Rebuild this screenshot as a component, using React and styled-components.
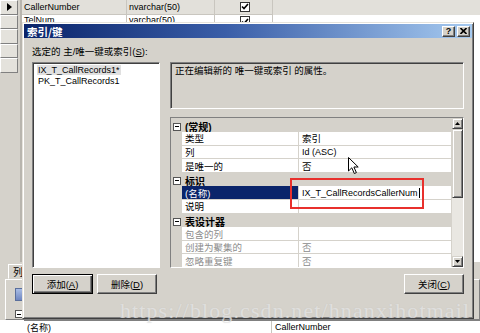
import React from 'react';
import styled, { createGlobalStyle, css } from 'styled-components';

const FACE = '#d5d2cb';
const SHADOW = '#808080';
const DARK = '#404040';
const NAVY = '#0a246a';

const Global = createGlobalStyle`
  html, body { margin: 0; padding: 0; background: #fff; }
  body {
    font-family: "Liberation Sans", "Noto Sans CJK SC", sans-serif;
    font-size: 9.5px;
    color: #000;
  }
  * { box-sizing: border-box; }
`;

const Screen = styled.div`
  position: relative;
  width: 480px;
  height: 333px;
  overflow: hidden;
  background: #fff;
`;

/* ---------- background: table designer ---------- */
const Designer = styled.div`
  display: flex;
  flex-direction: column;
  height: 100%;
`;

const GridArea = styled.div`
  display: flex;
  height: 262px;
`;

const RowHeaders = styled.div`
  width: 22px;
  display: flex;
  flex-direction: column;
  background: ${FACE};
  border-right: 2px solid #b8b5ae;
`;

const RowHead = styled.div`
  height: 14.5px;
  width: 18px;
  border: 1px solid;
  border-color: #fff ${SHADOW} ${SHADOW} #fff;
  background: #e4e2dc;
  display: flex;
  align-items: center;
  justify-content: center;
`;

const GridBody = styled.div`
  flex: 1;
  display: flex;
  flex-direction: column;
`;

const GridRow = styled.div`
  display: flex;
  height: 14.5px;
  background: ${(p) => (p.$sel ? '#e2e0da' : '#fff')};
`;

const GridCell = styled.div`
  width: ${(p) => p.$w}px;
  border-right: 1px solid #c9c6bf;
  border-bottom: 1px solid #c9c6bf;
  padding-left: 2px;
  display: flex;
  align-items: ${(p) => (p.$top ? 'flex-start' : 'center')};
  justify-content: ${(p) => (p.$center ? 'center' : 'flex-start')};
  font-size: 9px;
  white-space: nowrap;
  overflow: hidden;
`;

const Check = styled.div`
  width: 10px;
  height: 10px;
  border: 1px solid #333;
  background: #fff;
  display: flex;
  align-items: center;
  justify-content: center;
`;

const LowerPanel = styled.div`
  height: 58px;
  background: ${FACE};
  display: flex;
  flex-direction: column;
  padding: 2px 0 0 5px;
`;

const TabRow = styled.div`
  display: flex;
  height: 15px;
  padding-left: 3px;
`;

const Tab = styled.div`
  padding: 0 4px;
  border: 1px solid;
  border-color: #fff ${DARK} transparent #fff;
  display: flex;
  align-items: center;
  font-size: 10px;
`;

const TabPage = styled.div`
  flex: 1;
  border: 1px solid;
  border-color: #fff ${SHADOW} ${SHADOW} #fff;
  padding: 8px 0 0 9px;
  display: flex;
  flex-direction: column;
  gap: 9px;
`;

const ToolIcon = styled.div`
  width: 9px;
  height: 13px;
  border: 1px solid #5a6f9c;
  background: linear-gradient(#a9bde6, #6f86c0);
`;

const BottomRow = styled.div`
  height: 13px;
  display: flex;
  background: #fff;
  border-top: 1px solid ${SHADOW};
  margin-left: 24px;
`;

const BottomCell = styled.div`
  width: ${(p) => (p.$w ? `${p.$w}px` : 'auto')};
  flex: ${(p) => (p.$w ? 'none' : 1)};
  padding-left: 3px;
  border-right: ${(p) => (p.$w ? `1px solid #c9c6bf` : 'none')};
  font-size: 9px;
  display: flex;
  align-items: center;
`;

/* ---------- dialog ---------- */
const Dialog = styled.div`
  position: absolute;
  left: 22px;
  top: 22px;
  width: 452px;
  height: 297px;
  background: ${FACE};
  border: 1px solid;
  border-color: #e6e3dc ${DARK} ${DARK} #e6e3dc;
  box-shadow: inset 1px 1px #fff, inset -1px -1px ${SHADOW};
  padding: 1px;
  display: flex;
  flex-direction: column;
`;

const TitleBar = styled.div`
  height: 14px;
  background: linear-gradient(90deg, ${NAVY} 0%, #3a5ea8 45%, #a6caf0 100%);
  display: flex;
  align-items: center;
  justify-content: space-between;
  padding: 0 2px 0 3px;
`;

const Title = styled.div`
  color: #fff;
  font-weight: bold;
  font-size: 10.5px;
  font-family: "Noto Sans CJK SC", sans-serif;
`;

const TitleButtons = styled.div`
  display: flex;
  gap: 2px;
`;

const TBtn = styled.div`
  width: 13px;
  height: 11px;
  background: ${FACE};
  border: 1px solid;
  border-color: #fff ${DARK} ${DARK} #fff;
  box-shadow: inset -1px -1px ${SHADOW};
  display: flex;
  align-items: center;
  justify-content: center;
  font-weight: bold;
  font-size: 9px;
  line-height: 1;
`;

const Body = styled.div`
  flex: 1;
  display: flex;
  flex-direction: column;
  padding: 8px 8px 0 8px;
`;

const Label = styled.div`
  height: 12px;
  line-height: 12px;
  font-size: 9.5px;
  margin-bottom: 4px;
`;

const Main = styled.div`
  display: flex;
  gap: 10px;
  height: 206px;
`;

const ListBox = styled.div`
  width: 128px;
  background: #fff;
  border: 1px solid;
  border-color: ${SHADOW} #fff #fff ${SHADOW};
  box-shadow: inset 1px 1px ${DARK};
  padding: 2px 0 0 4px;
  display: flex;
  flex-direction: column;
`;

const ListItem = styled.div`
  height: 11px;
  line-height: 11px;
  font-size: 9px;
  span {
    padding: 0 1px;
    background: ${(p) => (p.$sel ? '#e0e0e0' : 'transparent')};
  }
`;

const RightCol = styled.div`
  flex: 1;
  display: flex;
  flex-direction: column;
  gap: 8px;
`;

const DescBox = styled.div`
  height: 47px;
  border: 1px solid;
  border-color: ${SHADOW} #fff #fff ${SHADOW};
  box-shadow: inset 1px 1px ${DARK};
  padding: 2px 4px;
  line-height: 12px;
  font-size: 9.5px;
`;

const PropGrid = styled.div`
  position: relative;
  flex: 1;
  display: flex;
  border: 1px solid;
  border-color: ${SHADOW} #fff #fff ${SHADOW};
  background: ${FACE};
  overflow: hidden;
`;

const Rows = styled.div`
  flex: 1;
  display: flex;
  flex-direction: column;
  padding-top: 0.5px;
`;

const PRow = styled.div`
  display: grid;
  grid-template-columns: 11px 117px 1fr;
  height: 13.6px;
`;

const Gutter = styled.div`
  background: ${FACE};
  display: flex;
  align-items: center;
  justify-content: center;
`;

const Expander = styled.div`
  width: 8px;
  height: 8px;
  border: 1px solid #555;
  background: #fff;
  display: flex;
  align-items: center;
  justify-content: center;
  &::after {
    content: '';
    width: 4px;
    height: 1px;
    background: #000;
  }
`;

const CatLabel = styled.div`
  grid-column: 2 / 4;
  background: ${FACE};
  font-weight: bold;
  padding-left: 3px;
  display: flex;
  align-items: center;
  font-size: 10px;
  border-bottom: 1px solid ${FACE};
`;

const PCell = styled.div`
  background: ${(p) => (p.$sel ? NAVY : '#fff')};
  color: ${(p) => (p.$sel ? '#fff' : p.$dis ? '#8c8c8c' : '#000')};
  border-right: 1px solid ${FACE};
  border-bottom: 1px solid ${FACE};
  padding-left: 3px;
  display: flex;
  align-items: center;
  white-space: nowrap;
  overflow: hidden;
  font-size: ${(p) => (p.$latin ? '9px' : '9.5px')};
`;

const Caret = styled.span`
  display: inline-block;
  width: 1px;
  height: 10px;
  background: #000;
  margin-left: 1px;
`;

const ScrollBar = styled.div`
  width: 11px;
  display: flex;
  flex-direction: column;
  background: #e9e7e2;
`;

const SBtn = styled.div`
  height: ${(p) => p.$h || 11}px;
  flex: none;
  background: ${FACE};
  border: 1px solid;
  border-color: ${FACE} ${DARK} ${DARK} ${FACE};
  box-shadow: inset 1px 1px #fff, inset -1px -1px ${SHADOW};
  display: flex;
  align-items: center;
  justify-content: center;
`;

const Track = styled.div`
  flex: 1;
`;

const RedBox = styled.div`
  position: absolute;
  left: 119px;
  top: 60px;
  width: 134px;
  height: 31px;
  border: 2.5px solid #e8302c;
  pointer-events: none;
`;

const Cursor = styled.svg`
  position: absolute;
  left: 177px;
  top: 39px;
`;

const ButtonRow = styled.div`
  display: flex;
  justify-content: space-between;
  margin-top: 6px;
`;

const BtnGroup = styled.div`
  display: flex;
  gap: 4px;
`;

const Btn = styled.div`
  width: ${(p) => p.$w}px;
  height: 20px;
  background: ${FACE};
  display: flex;
  align-items: center;
  justify-content: center;
  font-size: 9.5px;
  border: 1px solid;
  border-color: #fff ${DARK} ${DARK} #fff;
  box-shadow: inset -1px -1px ${SHADOW};
  ${(p) =>
    p.$default &&
    css`
      border-color: #000;
      box-shadow: inset 1px 1px #fff, inset -1px -1px ${DARK}, inset -2px -2px ${SHADOW};
    `}
`;

const Watermark = styled.div`
  position: absolute;
  left: 120px;
  top: 300px;
  font-family: "Liberation Serif", serif;
  font-size: 22px;
  line-height: 22px;
  letter-spacing: 1.1px;
  color: rgba(232, 232, 232, 0.75);
  text-shadow: 0 0 1px rgba(150, 150, 150, 0.25);
  white-space: nowrap;
  pointer-events: none;
`;

const Arrow = ({ dir }) => (
  <svg width="5" height="3" viewBox="0 0 5 3">
    {dir === 'up' ? <path d="M0 3 L2.5 0 L5 3 Z" fill="#000" /> : <path d="M0 0 L2.5 3 L5 0 Z" fill="#000" />}
  </svg>
);

const props = [
  { cat: '(常规)' },
  { name: '类型', value: '索引' },
  { name: '列', value: 'Id (ASC)', latin: true },
  { name: '是唯一的', value: '否' },
  { cat: '标识' },
  { name: '(名称)', value: 'IX_T_CallRecordsCallerNum', sel: true, latin: true, caret: true },
  { name: '说明', value: '' },
  { cat: '表设计器' },
  { name: '包含的列', value: '', dis: true },
  { name: '创建为聚集的', value: '否', dis: true },
  { name: '忽略重复键', value: '否', dis: true },
];

export default function App() {
  return (
    <Screen>
      <Global />
      <Designer>
        <GridArea>
          <RowHeaders>
            <RowHead>
              <svg width="5" height="8" viewBox="0 0 5 8">
                <path d="M0 0 L5 4 L0 8 Z" fill="#000" />
              </svg>
            </RowHead>
            <RowHead />
            <RowHead />
            <RowHead />
            <RowHead />
          </RowHeaders>
          <GridBody>
            <GridRow $sel>
              <GridCell $w={105}>CallerNumber</GridCell>
              <GridCell $w={88}>nvarchar(50)</GridCell>
              <GridCell $w={58} $center>
                <Check>
                  <svg width="8" height="7" viewBox="0 0 8 7">
                    <path d="M1 3.5 L3 5.5 L7 1" stroke="#000" strokeWidth="1.6" fill="none" />
                  </svg>
                </Check>
              </GridCell>
            </GridRow>
            <GridRow>
              <GridCell $w={105} $top>TelNum</GridCell>
              <GridCell $w={88} $top>varchar(50)</GridCell>
              <GridCell $w={58} $center>
                <Check>
                  <svg width="8" height="7" viewBox="0 0 8 7">
                    <path d="M1 3.5 L3 5.5 L7 1" stroke="#000" strokeWidth="1.6" fill="none" />
                  </svg>
                </Check>
              </GridCell>
            </GridRow>
          </GridBody>
        </GridArea>
        <LowerPanel>
          <TabRow>
            <Tab>列属性</Tab>
          </TabRow>
          <TabPage>
            <ToolIcon />
            <Expander />
          </TabPage>
        </LowerPanel>
        <BottomRow>
          <BottomCell $w={248}>(名称)</BottomCell>
          <BottomCell>CallerNumber</BottomCell>
        </BottomRow>
      </Designer>

      <Dialog>
        <TitleBar>
          <Title>索引/键</Title>
          <TitleButtons>
            <TBtn>?</TBtn>
            <TBtn>
              <svg width="7" height="6" viewBox="0 0 7 6">
                <path d="M0.5 0 L6.5 6 M6.5 0 L0.5 6" stroke="#000" strokeWidth="1.6" />
              </svg>
            </TBtn>
          </TitleButtons>
        </TitleBar>
        <Body>
          <Label>
            选定的 主/唯一键或索引(<u>S</u>):
          </Label>
          <Main>
            <ListBox>
              <ListItem $sel>
                <span>IX_T_CallRecords1*</span>
              </ListItem>
              <ListItem>
                <span>PK_T_CallRecords1</span>
              </ListItem>
            </ListBox>
            <RightCol>
              <DescBox>正在编辑新的 唯一键或索引 的属性。</DescBox>
              <PropGrid>
                <Rows>
                  {props.map((p, i) =>
                    p.cat ? (
                      <PRow key={i}>
                        <Gutter>
                          <Expander />
                        </Gutter>
                        <CatLabel>{p.cat}</CatLabel>
                      </PRow>
                    ) : (
                      <PRow key={i}>
                        <Gutter />
                        <PCell $sel={p.sel} $dis={p.dis}>
                          {p.name}
                        </PCell>
                        <PCell $dis={p.dis} $latin={p.latin}>
                          {p.value}
                          {p.caret && <Caret />}
                        </PCell>
                      </PRow>
                    )
                  )}
                </Rows>
                <ScrollBar>
                  <SBtn>
                    <Arrow dir="up" />
                  </SBtn>
                  <SBtn $h={69} />
                  <Track />
                  <SBtn>
                    <Arrow dir="down" />
                  </SBtn>
                </ScrollBar>
                <RedBox />
                <Cursor width="12" height="18" viewBox="0 0 12 18">
                  <path
                    d="M0.5 0.5 L0.5 14 L3.8 10.8 L6.3 16.5 L8.4 15.6 L5.9 10 L10.2 10 Z"
                    fill="#fff"
                    stroke="#000"
                    strokeWidth="1"
                  />
                </Cursor>
              </PropGrid>
            </RightCol>
          </Main>
          <ButtonRow>
            <BtnGroup>
              <Btn $w={61} $default>
                添加(<u>A</u>)
              </Btn>
              <Btn $w={60}>
                删除(<u>D</u>)
              </Btn>
            </BtnGroup>
            <Btn $w={60}>
              关闭(<u>C</u>)
            </Btn>
          </ButtonRow>
        </Body>
      </Dialog>

      <Watermark>https://blog.csdn.net/hnanxihotmail</Watermark>
    </Screen>
  );
}
